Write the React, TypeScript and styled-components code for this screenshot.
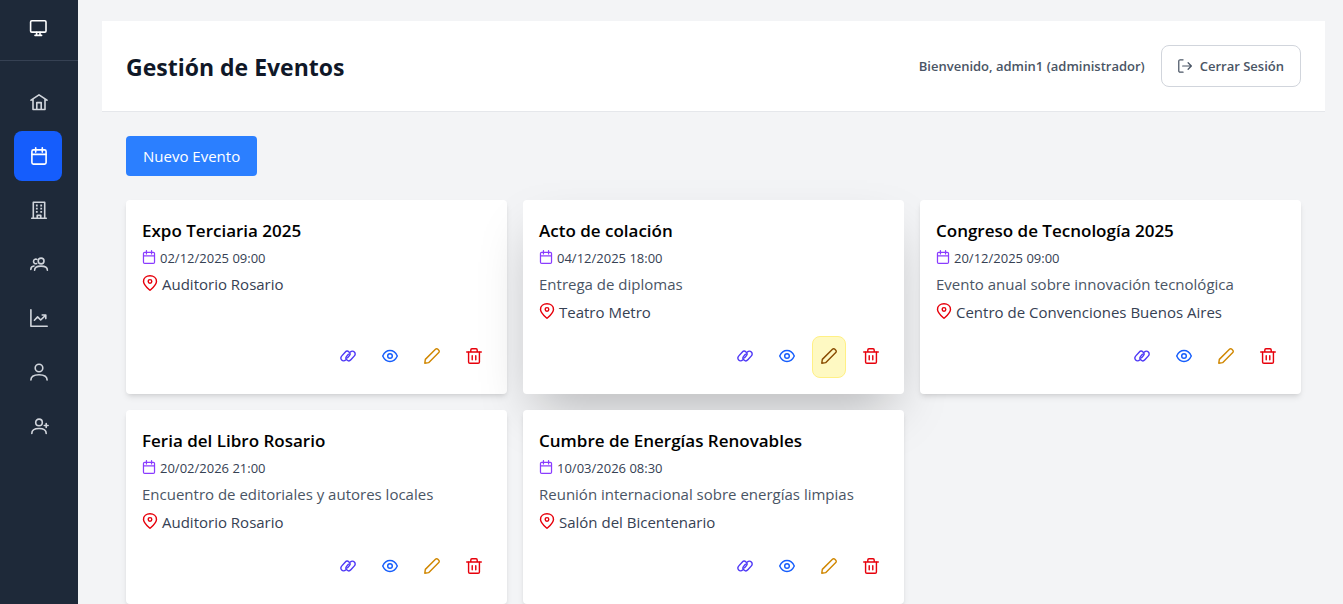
import React from "react";
import styled, { createGlobalStyle, css } from "styled-components";

const GlobalStyle = createGlobalStyle`
  *, *::before, *::after { box-sizing: border-box; }
  body {
    margin: 0;
    background: #f3f4f6;
    color: #000;
    font-family: "Segoe UI", "Open Sans", "Noto Sans", sans-serif;
    font-size: 15px;
    line-height: 24px;
  }
  h1, h2, p, ul { margin: 0; padding: 0; }
  button { font: inherit; cursor: pointer; }
`;

/* ---------- icons ---------- */

const Glyph = styled.svg<{ $size: number }>`
  display: block;
  flex: none;
  width: ${(p) => p.$size}px;
  height: ${(p) => p.$size}px;
  fill: none;
  stroke: currentColor;
  stroke-width: 1.6;
  stroke-linecap: round;
  stroke-linejoin: round;
`;

const shapes = {
  desktop: (
    <>
      <rect x="1.6" y="1.7" width="15.4" height="11.4" rx="1.2" />
      <path d="M7.600 13.200v3M11 13.200v3M6 16.400h6.600" />
    </>
  ),
  home: (
    <>
      <path d="M1 7.2 9 1.8l8 5.4M3 6.2v10.3h12V6.2" />
      <path d="M6.8 16.3V9.6h4.4v6.7" />
    </>
  ),
  calendar: (
    <>
      <rect x="1.900" y="2.900" width="14.200" height="14.200" rx="1.500" />
      <path d="M2 7.400h14M5.700.8v4.300M12.300.8v4.300" />
    </>
  ),
  building: (
    <>
      <path d="M3.300 17V1.200h11.400V17M1.700 17.200h14.600M7.200 17v-2.600h3.600V17" />
      <path
        d="M5.900 4.500h1.800M10.300 4.500h1.800M5.900 7.700h1.800M10.300 7.700h1.800M5.900 10.900h1.800M10.300 10.900h1.800"
        strokeWidth="1.800"
        strokeLinecap="butt"
      />
    </>
  ),
  users: (
    <>
      <circle cx="11.1" cy="6" r="2.9" />
      <path d="M4.6 15.2c0-3 2.6-4.1 6.4-4.1s6.4 1.1 6.4 4.1" />
      <path d="M6.9 4.4a2.3 2.3 0 1 0-.3 4.2M.8 14.4c0-2.2 1.2-3.2 3.2-3.4" />
    </>
  ),
  chart: (
    <>
      <path d="M.9.8v16.4h16.3" />
      <path d="m4.4 11.2 3.2-3.3 3.1 3.1 4.8-4.6M12.2 6h3.6v3.6" />
    </>
  ),
  user: (
    <>
      <circle cx="9" cy="5" r="3.8" />
      <path d="M.9 17c0-3.9 3-5.3 8.1-5.3s8.1 1.4 8.1 5.3" />
    </>
  ),
  userPlus: (
    <>
      <circle cx="9" cy="5.4" r="3.3" />
      <path d="M1.8 16.4c0-3.6 2.5-4.9 7.2-4.9s7.2 1.3 7.2 4.9M16.2 6.6v3.8M14.3 8.500h3.8" />
    </>
  ),
  signOut: (
    <>
      <path d="M6.5 1H2.700A1.700 1.700 0 0 0 1 2.700v12.600A1.700 1.700 0 0 0 2.700 17h3.800" />
      <path d="M6 9h11.200M13 4.800 17.200 9 13 13.200" />
    </>
  ),
  pin: (
    <>
      <path d="M9 17.200C6 14.500 1.700 11 1.700 7.200 1.700 3.300 5 .9 9 .9s7.300 2.400 7.300 6.300c0 3.800-4.300 7.300-7.300 10z" />
      <circle cx="9" cy="7.200" r="2" />
    </>
  ),
  link: (
    <>
      <path transform="translate(6.100 9) rotate(-48)" d="M.2 3.100H3A3.100 3.100 0 0 0 3-3.100H-3A3.100 3.100 0 0 0-3.200 3.100" />
      <path transform="translate(11.900 9) rotate(132)" d="M.2 3.100H3A3.100 3.100 0 0 0 3-3.100H-3A3.100 3.100 0 0 0-3.200 3.100" />
    </>
  ),
  eye: (
    <>
      <path d="M.8 9C2.500 5.200 5.400 2.800 9 2.800s6.500 2.400 8.200 6.200c-1.700 3.800-4.600 6.200-8.200 6.200S2.500 12.800.8 9z" />
      <circle cx="9" cy="9" r="2.600" />
    </>
  ),
  pencil: (
    <path d="M.9 17.100l.6-4.300L12.900 1.400a1.900 1.900 0 0 1 2.700 0l1 1a1.900 1.900 0 0 1 0 2.700L5.200 16.500z" />
  ),
  trash: (
    <>
      <path d="M.8 4.500h16.400M5.400 4.300V2.200c0-.8.5-1.300 1.300-1.300h4.600c.8 0 1.300.5 1.300 1.300v2.100" />
      <path d="M2.900 4.700v11c0 .9.600 1.500 1.500 1.500h9.200c.9 0 1.500-.6 1.500-1.500v-11M7 8.700v4.600M11 8.700v4.600" />
    </>
  ),
};

type IconName = keyof typeof shapes;

const Icon = ({ name, size = 16 }: { name: IconName; size?: number }) => (
  <Glyph $size={size} viewBox="0 0 18 18" overflow="visible" aria-hidden="true">
    {shapes[name]}
  </Glyph>
);

/* ---------- layout ---------- */

const Shell = styled.div`
  display: flex;
  min-height: 100vh;
`;

const Sidebar = styled.aside`
  flex: none;
  width: 78px;
  background: #1e2939;
  color: #fff;
`;

const Brand = styled.div`
  display: flex;
  justify-content: center;
  padding: 19px 2px 23px 0;
  border-bottom: 1px solid #364153;
`;

const NavList = styled.ul`
  display: flex;
  flex-direction: column;
  gap: 4px;
  padding: 16px 15px 16px 14px;
  list-style: none;
`;

const NavLink = styled.a<{ $active?: boolean }>`
  display: flex;
  align-items: center;
  width: 48px;
  height: 50px;
  padding-left: 16px;
  border-radius: 8px;
  color: ${(p) => (p.$active ? "#fff" : "#d1d5dc")};
  background: ${(p) => (p.$active ? "#155dfc" : "transparent")};
`;

const Main = styled.main`
  flex: 1;
  min-width: 0;
  padding: 21px 18px 0 24px;
`;

const Header = styled.header`
  display: flex;
  align-items: center;
  justify-content: space-between;
  padding: 24px;
  background: #fff;
  border-bottom: 1px solid #e5e7eb;
`;

const PageTitle = styled.h1`
  padding-top: 2px;
  color: #101828;
  font-size: 23px;
  font-weight: 700;
  line-height: 32px;
`;

const Session = styled.div`
  display: flex;
  align-items: center;
  gap: 16px;
  color: #4a5565;
  font-size: 13px;
  font-weight: 600;
  line-height: 20px;
`;

const LogoutButton = styled.button`
  display: flex;
  align-items: center;
  gap: 8px;
  height: 42px;
  padding: 0 16px;
  border: 1px solid #d1d5dc;
  border-radius: 8px;
  background: #fff;
  color: #4a5565;
`;

const Content = styled.section`
  padding: 24px;
`;

const PrimaryButton = styled.button`
  display: block;
  height: 40px;
  padding: 0 17px;
  margin-bottom: 24px;
  border: 0;
  border-radius: 4px;
  background: #2b7fff;
  color: #fff;
`;

const CardGrid = styled.div`
  display: grid;
  grid-template-columns: repeat(3, minmax(0, 1fr));
  gap: 16px;
`;

const Card = styled.article<{ $raised?: boolean }>`
  display: flex;
  flex-direction: column;
  gap: 4px;
  min-height: 194px;
  padding: 16px;
  border-radius: 4px;
  background: #fff;
  box-shadow: ${(p) =>
    p.$raised
      ? "0 25px 50px -12px rgba(0, 0, 0, 0.25)"
      : "0 4px 6px -1px rgba(0, 0, 0, 0.1), 0 2px 4px -2px rgba(0, 0, 0, 0.1)"};
`;

const CardTitle = styled.h2`
  padding-top: 2px;
  font-size: 17px;
  font-weight: 600;
  line-height: 26px;
`;

const DateLine = styled.p`
  display: flex;
  align-items: center;
  gap: 4px;
  color: #364153;
  font-size: 13px;
  line-height: 20px;
  svg {
    margin-bottom: 2px;
    color: #8a3cff;
  }
`;

const Description = styled.p`
  color: #4a5565;
`;

const Place = styled.p`
  display: flex;
  align-items: center;
  gap: 4px;
  color: #364153;
  svg {
    margin-bottom: 2px;
    color: #e7000b;
  }
`;

const Actions = styled.div`
  display: flex;
  justify-content: flex-end;
  gap: 8px;
  margin-top: auto;
`;

const ActionButton = styled.button<{ $color: string; $highlight?: boolean }>`
  display: flex;
  align-items: center;
  justify-content: center;
  width: 34px;
  height: 42px;
  padding: 0 0 2px;
  border: 1px solid transparent;
  border-radius: 8px;
  background: transparent;
  color: ${(p) => p.$color};
  ${(p) =>
    p.$highlight &&
    css`
      border-color: #fff085;
      background: #fef9c2;
      color: #894b00;
    `}
`;

/* ---------- data ---------- */

const navItems: { icon: IconName; label: string; active?: boolean }[] = [
  { icon: "home", label: "Inicio" },
  { icon: "calendar", label: "Eventos", active: true },
  { icon: "building", label: "Lugares" },
  { icon: "users", label: "Participantes" },
  { icon: "chart", label: "Reportes" },
  { icon: "user", label: "Perfil" },
  { icon: "userPlus", label: "Registrar usuario" },
];

const events = [
  { title: "Expo Terciaria 2025", date: "02/12/2025 09:00", text: "", place: "Auditorio Rosario" },
  { title: "Acto de colación", date: "04/12/2025 18:00", text: "Entrega de diplomas", place: "Teatro Metro", hovered: true },
  { title: "Congreso de Tecnología 2025", date: "20/12/2025 09:00", text: "Evento anual sobre innovación tecnológica", place: "Centro de Convenciones Buenos Aires" },
  { title: "Feria del Libro Rosario", date: "20/02/2026 21:00", text: "Encuentro de editoriales y autores locales", place: "Auditorio Rosario" },
  { title: "Cumbre de Energías Renovables", date: "10/03/2026 08:30", text: "Reunión internacional sobre energías limpias", place: "Salón del Bicentenario" },
];

export default function App() {
  return (
    <>
      <GlobalStyle />
      <Shell>
        <Sidebar>
          <Brand>
            <Icon name="desktop" size={18} />
          </Brand>
          <nav>
            <NavList>
              {navItems.map((item) => (
                <li key={item.icon}>
                  <NavLink href="#" aria-label={item.label} $active={item.active}>
                    <Icon name={item.icon} size={18} />
                  </NavLink>
                </li>
              ))}
            </NavList>
          </nav>
        </Sidebar>
        <Main>
          <Header>
            <PageTitle>Gestión de Eventos</PageTitle>
            <Session>
              <span>Bienvenido, admin1 (administrador)</span>
              <LogoutButton type="button">
                <Icon name="signOut" size={14} />
                Cerrar Sesión
              </LogoutButton>
            </Session>
          </Header>
          <Content>
            <PrimaryButton type="button">Nuevo Evento</PrimaryButton>
            <CardGrid>
              {events.map((event) => (
                <Card key={event.title} $raised={event.hovered}>
                  <CardTitle>{event.title}</CardTitle>
                  <DateLine>
                    <Icon name="calendar" size={14} />
                    {event.date}
                  </DateLine>
                  {event.text && <Description>{event.text}</Description>}
                  <Place>
                    <Icon name="pin" />
                    {event.place}
                  </Place>
                  <Actions>
                    <ActionButton type="button" aria-label="Enlazar" $color="#4f39f6">
                      <Icon name="link" />
                    </ActionButton>
                    <ActionButton type="button" aria-label="Ver" $color="#155dfc">
                      <Icon name="eye" />
                    </ActionButton>
                    <ActionButton type="button" aria-label="Editar" $color="#d08700" $highlight={event.hovered}>
                      <Icon name="pencil" />
                    </ActionButton>
                    <ActionButton type="button" aria-label="Eliminar" $color="#e7000b">
                      <Icon name="trash" />
                    </ActionButton>
                  </Actions>
                </Card>
              ))}
            </CardGrid>
          </Content>
        </Main>
      </Shell>
    </>
  );
}
